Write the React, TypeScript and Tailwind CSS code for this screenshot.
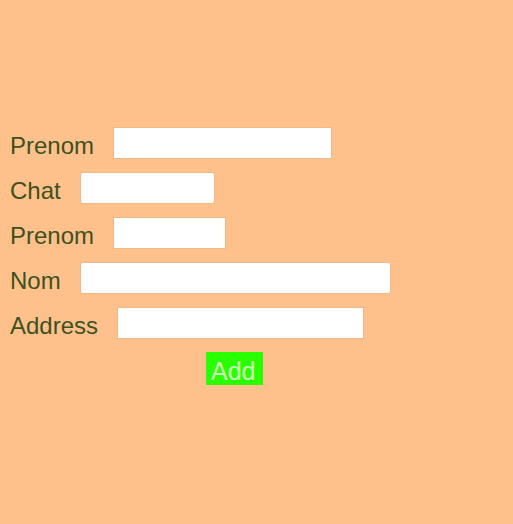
type Field = {
  id: string;
  label: string;
  size: string;
};

const fields: Field[] = [
  { id: "prenom", label: "Prenom", size: "w-[219px]" },
  { id: "chat", label: "Chat", size: "w-[135px] rounded-[3px]" },
  { id: "prenom-2", label: "Prenom", size: "w-[113px]" },
  { id: "nom", label: "Nom", size: "w-[311px] rounded-[3px]" },
  { id: "address", label: "Address", size: "w-[247px]" },
];

export default function App() {
  return (
    <main className="min-h-screen bg-[#ffc18c] px-[10px] pt-[127px] font-['Liberation_Sans',Arial,sans-serif]">
      <form
        className="flex flex-col items-start gap-[13px]"
        onSubmit={(event) => event.preventDefault()}
      >
        {fields.map((field) => (
          <div key={field.id} className="flex items-end gap-[19px]">
            <label
              htmlFor={field.id}
              className="text-[24px] leading-[26px] text-[#3f5020]"
            >
              {field.label}
            </label>
            <input
              id={field.id}
              type="text"
              className={`h-8 border border-[#eeb888] bg-white px-2 text-base ${field.size}`}
            />
          </div>
        ))}
        <button
          type="submit"
          className="ml-[196px] w-[57px] bg-[#2aff00] px-[5px] pt-[5px] text-left text-[25px] leading-[28px] text-[#d0ffb8]"
        >
          Add
        </button>
      </form>
    </main>
  );
}
